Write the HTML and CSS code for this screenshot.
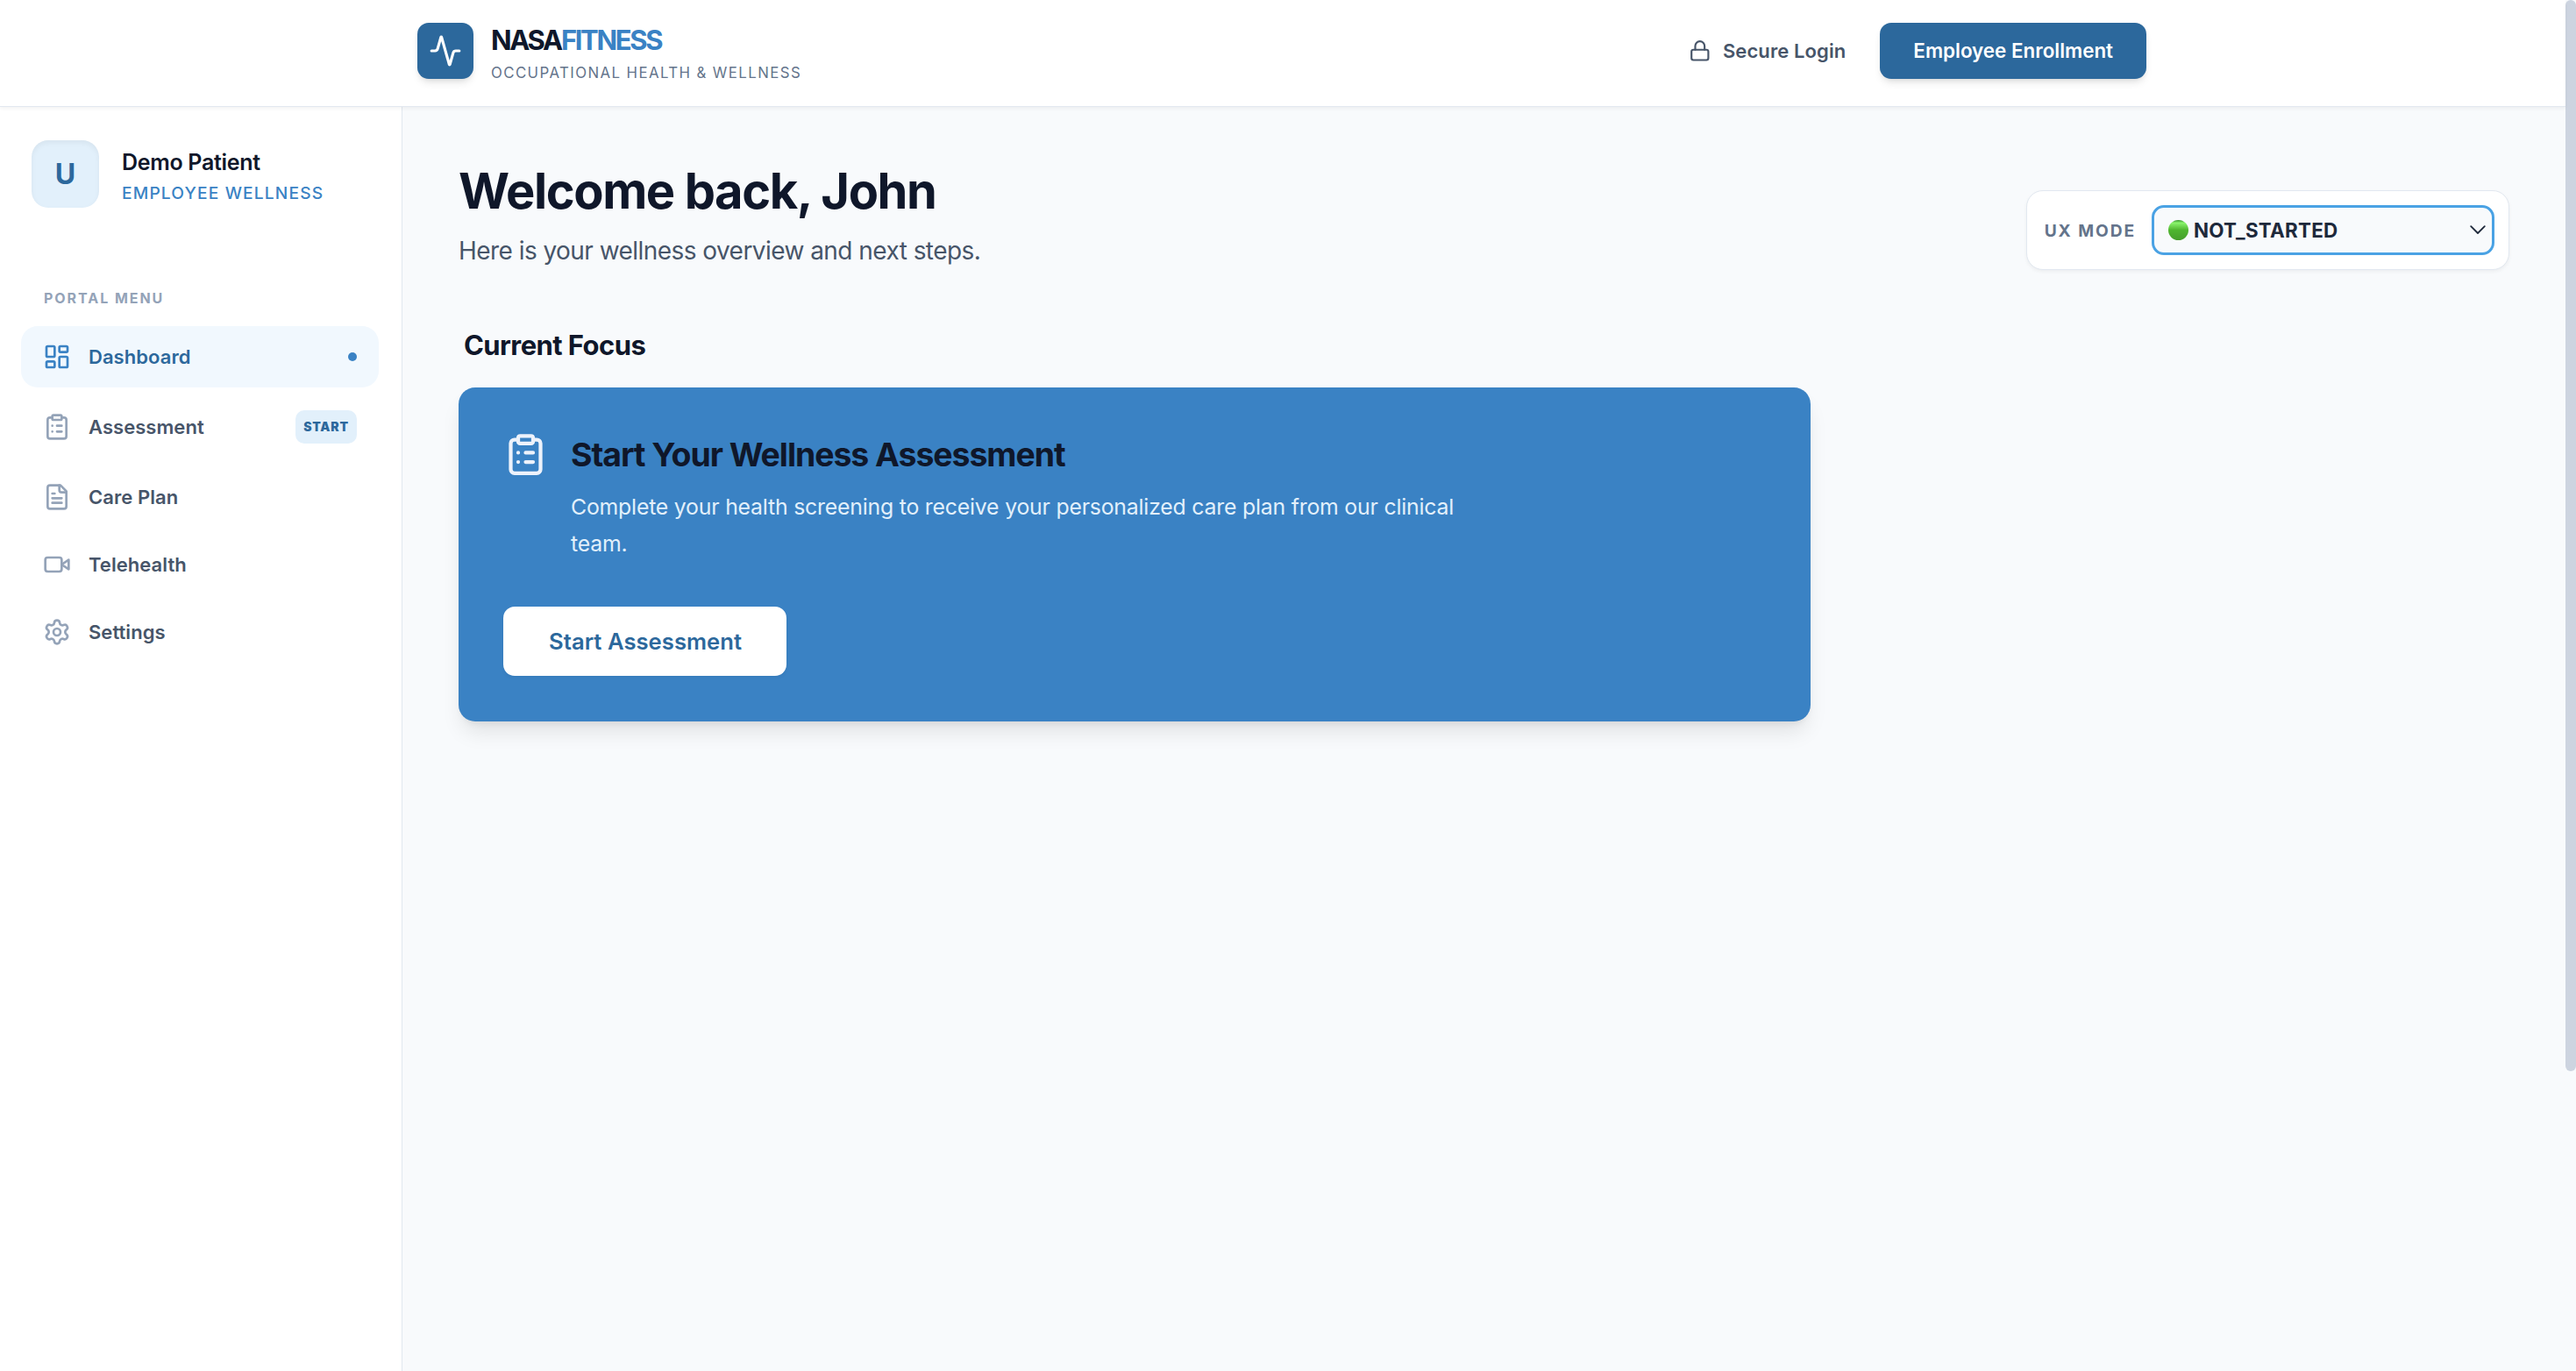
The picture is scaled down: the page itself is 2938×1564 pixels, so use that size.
FILE: index.html
```html
<!DOCTYPE html>
<html lang="en">
<head>
  <meta charset="utf-8">
  <meta name="viewport" content="width=device-width, initial-scale=1">
  <title>NASAFITNESS - Patient Portal</title>
  <link rel="stylesheet" href="styles.css">
</head>
<body>
  <div class="page">
    <header class="site-header">
      <div class="header-inner">
        <div class="brand">
          <div class="brand-logo">
            <svg viewBox="0 0 24 24" class="icon"><path d="M22 12h-2.48a2 2 0 0 0-1.93 1.46l-2.35 8.36a.25.25 0 0 1-.48 0L9.24 2.18a.25.25 0 0 0-.48 0l-2.35 8.36A2 2 0 0 1 4.49 12H2"/></svg>
          </div>
          <div class="brand-text">
            <div class="brand-name">NASA<span class="accent">FITNESS</span></div>
            <div class="brand-tag">OCCUPATIONAL HEALTH &amp; WELLNESS</div>
          </div>
        </div>
        <div class="header-actions">
          <a class="login">
            <svg viewBox="0 0 24 24" class="icon"><rect width="18" height="11" x="3" y="11" rx="2"/><path d="M7 11V7a5 5 0 0 1 10 0v4"/></svg>
            <span>Secure Login</span>
          </a>
          <a class="enroll">Employee Enrollment</a>
        </div>
      </div>
    </header>

    <div class="layout">
      <aside class="sidebar">
        <div class="profile">
          <div class="avatar">U</div>
          <div class="profile-text">
            <div class="profile-name">Demo Patient</div>
            <div class="profile-plan">EMPLOYEE WELLNESS</div>
          </div>
        </div>

        <div class="menu-title">PORTAL MENU</div>
        <nav class="menu">
          <a class="menu-item active">
            <svg viewBox="0 0 24 24" class="icon"><rect width="7" height="9" x="3" y="3" rx="1"/><rect width="7" height="5" x="14" y="3" rx="1"/><rect width="7" height="9" x="14" y="12" rx="1"/><rect width="7" height="5" x="3" y="16" rx="1"/></svg>
            <span>Dashboard</span>
            <i class="dot"></i>
          </a>
          <a class="menu-item">
            <svg viewBox="0 0 24 24" class="icon"><rect width="8" height="4" x="8" y="2" rx="1"/><path d="M16 4h2a2 2 0 0 1 2 2v14a2 2 0 0 1-2 2H6a2 2 0 0 1-2-2V6a2 2 0 0 1 2-2h2"/><path d="M12 11h4M12 16h4M8 11h.01M8 16h.01"/></svg>
            <span>Assessment</span>
            <b class="badge">START</b>
          </a>
          <a class="menu-item">
            <svg viewBox="0 0 24 24" class="icon"><path d="M15 2H6a2 2 0 0 0-2 2v16a2 2 0 0 0 2 2h12a2 2 0 0 0 2-2V7Z"/><path d="M14 2v4a2 2 0 0 0 2 2h4"/><path d="M10 9H8M16 13H8M16 17H8"/></svg>
            <span>Care Plan</span>
          </a>
          <a class="menu-item">
            <svg viewBox="0 0 24 24" class="icon"><path d="m22 8-6 4 6 4V8Z"/><rect x="2" y="6" width="14" height="12" rx="2"/></svg>
            <span>Telehealth</span>
          </a>
          <a class="menu-item">
            <svg viewBox="0 0 24 24" class="icon"><path d="M9.671 4.136a2.34 2.34 0 0 1 4.659 0 2.34 2.34 0 0 0 3.319 1.915 2.34 2.34 0 0 1 2.33 4.033 2.34 2.34 0 0 0 0 3.831 2.34 2.34 0 0 1-2.33 4.033 2.34 2.34 0 0 0-3.319 1.915 2.34 2.34 0 0 1-4.659 0 2.34 2.34 0 0 0-3.32-1.915 2.34 2.34 0 0 1-2.33-4.033 2.34 2.34 0 0 0 0-3.831A2.34 2.34 0 0 1 6.35 6.051a2.34 2.34 0 0 0 3.319-1.915"/><circle cx="12" cy="12" r="3"/></svg>
            <span>Settings</span>
          </a>
        </nav>
      </aside>

      <main class="content">
        <div class="content-head">
          <div>
            <h1>Welcome back, John</h1>
            <p class="lead">Here is your wellness overview and next steps.</p>
          </div>
          <div class="mode">
            <span class="mode-label">UX MODE</span>
            <div class="mode-select">
              <i class="status"></i>
              <span>NOT_STARTED</span>
              <svg viewBox="0 0 18 11" class="chevron"><path d="M1.2 1.2 9 9l7.8-7.8"/></svg>
            </div>
          </div>
        </div>

        <div class="grid">
          <section class="focus">
            <h2>Current Focus</h2>
            <div class="card">
              <div class="card-body">
                <svg viewBox="0 0 24 24" class="icon"><rect width="8" height="4" x="8" y="2" rx="1"/><path d="M16 4h2a2 2 0 0 1 2 2v14a2 2 0 0 1-2 2H6a2 2 0 0 1-2-2V6a2 2 0 0 1 2-2h2"/><path d="M12 11h4M12 16h4M8 11h.01M8 16h.01"/></svg>
                <div>
                  <h3>Start Your Wellness Assessment</h3>
                  <p>Complete your health screening to receive your personalized care plan from our clinical team.</p>
                </div>
              </div>
              <a class="card-button">Start Assessment</a>
            </div>
          </section>
        </div>
      </main>
    </div>
  </div>
  <div class="scrollbar"></div>
</body>
</html>
```
FILE: styles.css
```css
* {
  box-sizing: border-box;
}

body {
  margin: 0;
  height: 1564px;
  display: flex;
  overflow: hidden;
  background: #f8fafc;
  color: #0f172a;
  font-family: Inter, "Liberation Sans", sans-serif;
}

h1, h2, h3, p {
  margin: 0;
}

.icon {
  display: block;
  flex: none;
  width: 32px;
  height: 32px;
  fill: none;
  stroke: currentColor;
  stroke-width: 2;
  stroke-linecap: round;
  stroke-linejoin: round;
}

.page {
  flex: 1;
  display: flex;
  flex-direction: column;
}

/* header */
.site-header {
  position: relative;
  height: 122px;
  background: #fff;
  border-bottom: 1px solid #e2e8f0;
  box-shadow: 0 2px 4px rgba(0, 0, 0, 0.05);
}

.header-inner {
  display: flex;
  justify-content: space-between;
  align-items: flex-start;
  max-width: 2048px;
  margin: 0 auto;
  padding: 26px 39px 0 37px;
}

.brand {
  display: flex;
  gap: 20px;
}

.brand-logo {
  display: flex;
  align-items: center;
  justify-content: center;
  width: 64px;
  height: 64px;
  border-radius: 13px;
  background: #2c689c;
  color: #fff;
  box-shadow: 0 6px 10px -2px rgba(0, 0, 0, 0.1), 0 3px 6px -3px rgba(0, 0, 0, 0.1);
}

.brand-logo .icon {
  width: 38px;
  height: 38px;
}

.brand-text {
  padding-top: 4px;
}

.brand-name {
  font-size: 31px;
  font-weight: 700;
  line-height: 32px;
  letter-spacing: -2.35px;
}

.accent {
  color: #3a82c4;
}

.brand-tag {
  margin-top: 8px;
  font-size: 16.8px;
  font-weight: 400;
  line-height: 26px;
  letter-spacing: 1.42px;
  color: #64748b;
}

.header-actions {
  display: flex;
  align-items: center;
  gap: 39px;
}

.login {
  display: flex;
  align-items: center;
  gap: 13px;
  font-size: 22px;
  font-weight: 600;
  letter-spacing: 0.1px;
  color: #475569;
}

.login .icon {
  width: 25.6px;
  height: 25.6px;
}

.enroll {
  height: 64px;
  padding: 0 38px;
  border-radius: 13px;
  background: #2c689c;
  color: #fff;
  font-size: 22.4px;
  font-weight: 600;
  line-height: 64px;
  box-shadow: 0 6px 10px -2px rgba(0, 0, 0, 0.1), 0 3px 6px -3px rgba(0, 0, 0, 0.1);
}

.layout {
  flex: 1;
  display: flex;
}

/* sidebar */
.sidebar {
  width: 459px;
  padding: 38px 26px 0 24px;
  background: #fff;
  border-right: 1px solid #e2e8f0;
}

.profile {
  display: flex;
  gap: 26px;
  padding-left: 12px;
}

.avatar {
  width: 77px;
  height: 77px;
  border-radius: 19px;
  background: #e2f0fb;
  color: #2c689c;
  font-size: 32px;
  font-weight: 700;
  line-height: 78px;
  text-align: center;
  box-shadow: inset 0 3px 6px rgba(0, 0, 0, 0.05);
}

.profile-text {
  padding-top: 9px;
}

.profile-name {
  font-size: 25px;
  font-weight: 600;
  line-height: 32px;
  letter-spacing: -0.3px;
  white-space: nowrap;
}

.profile-plan {
  margin-top: 6px;
  font-size: 19.2px;
  font-weight: 500;
  line-height: 26px;
  letter-spacing: 1.15px;
  color: #3a82c4;
  white-space: nowrap;
}

.menu-title {
  margin: 90px 0 19px 26px;
  font-size: 16px;
  font-weight: 700;
  line-height: 26px;
  letter-spacing: 1.95px;
  color: #94a3b8;
}

.menu {
  display: flex;
  flex-direction: column;
  gap: 7px;
}

.menu-item {
  display: flex;
  align-items: center;
  gap: 20px;
  padding: 19px 25px;
  border-radius: 19px;
  font-size: 22px;
  font-weight: 600;
  line-height: 32px;
  letter-spacing: 0.05px;
  color: #475569;
}

.menu-item .icon {
  color: #94a3b8;
}

.menu-item.active {
  background: #f1f8fe;
  color: #2c689c;
}

.menu-item.active .icon {
  color: #3a82c4;
}

.dot {
  width: 10px;
  height: 10px;
  margin-left: auto;
  border-radius: 50%;
  background: #3a82c4;
}

.badge {
  width: 70px;
  height: 38px;
  margin-left: auto;
  border-radius: 10px;
  background: #e2f0fb;
  color: #2c689c;
  font-size: 14px;
  line-height: 38px;
  letter-spacing: 0.8px;
  text-align: center;
}

/* main area */
.content {
  flex: 1;
  padding: 64px;
}

.content-head {
  display: flex;
  justify-content: space-between;
  align-items: flex-start;
}

h1 {
  font-size: 56px;
  font-weight: 700;
  line-height: 64px;
  letter-spacing: -1.4px;
}

.lead {
  margin-top: 16px;
  font-size: 28px;
  line-height: 40px;
  letter-spacing: -0.55px;
  color: #475569;
}

.mode {
  display: flex;
  align-items: center;
  gap: 18px;
  height: 91px;
  margin-top: 31px;
  padding: 0 16px 0 20px;
  border: 1px solid #e2e8f0;
  border-radius: 19px;
  background: #fff;
  box-shadow: 0 2px 4px rgba(0, 0, 0, 0.05);
}

.mode-label {
  font-size: 19.2px;
  font-weight: 700;
  letter-spacing: 1.92px;
  color: #64748b;
}

.mode-select {
  display: flex;
  align-items: center;
  width: 391px;
  height: 57px;
  padding: 0 7px 0 16px;
  border: 3px solid #4aa2e4;
  border-radius: 14px;
  background: #f8fafc;
  color: #1e293b;
  font-size: 22.4px;
  font-weight: 700;
  letter-spacing: 0.25px;
}

.status {
  width: 23px;
  height: 23px;
  margin-right: 6px;
  border-radius: 50%;
  background: linear-gradient(#35912b, #8af56c 14%, #4fb52f 50%, #469e2c);
}

.chevron {
  width: 18px;
  height: 11px;
  margin-left: auto;
  fill: none;
  stroke: currentColor;
  stroke-width: 1.8;
  stroke-linecap: round;
  stroke-linejoin: round;
}

.grid {
  display: grid;
  grid-template-columns: repeat(3, 1fr);
  gap: 51px;
  margin-top: 64px;
}

.focus {
  grid-column: span 2;
}

h2 {
  margin: 0 0 26px 6px;
  font-size: 31px;
  font-weight: 700;
  line-height: 44px;
  letter-spacing: -0.57px;
}

.card {
  height: 381px;
  padding: 51px;
  border-radius: 19px;
  background: #3a82c4;
  box-shadow: 0 16px 24px -5px rgba(0, 0, 0, 0.1), 0 6px 10px -6px rgba(0, 0, 0, 0.1);
}

.card-body {
  display: flex;
  gap: 26px;
}

.card-body .icon {
  width: 51px;
  height: 51px;
  color: #edf2fb;
}

h3 {
  font-size: 37.4px;
  font-weight: 700;
  line-height: 51px;
  letter-spacing: -1.04px;
}

.card-body p {
  max-width: 1036px;
  margin-top: 14px;
  font-size: 24.8px;
  line-height: 41.6px;
  letter-spacing: -0.2px;
  color: #e2f0fb;
}

.card-button {
  display: inline-block;
  height: 79px;
  margin-top: 51px;
  padding: 0 51px 0 52px;
  border-radius: 13px;
  background: #fff;
  color: #2c689c;
  font-size: 25.6px;
  font-weight: 600;
  line-height: 79px;
  letter-spacing: 0.05px;
  box-shadow: 0 2px 4px rgba(0, 0, 0, 0.05);
}

.scrollbar {
  width: 12px;
  height: 1222px;
  border-radius: 6px;
  background: #cdd4e0;
}
```
